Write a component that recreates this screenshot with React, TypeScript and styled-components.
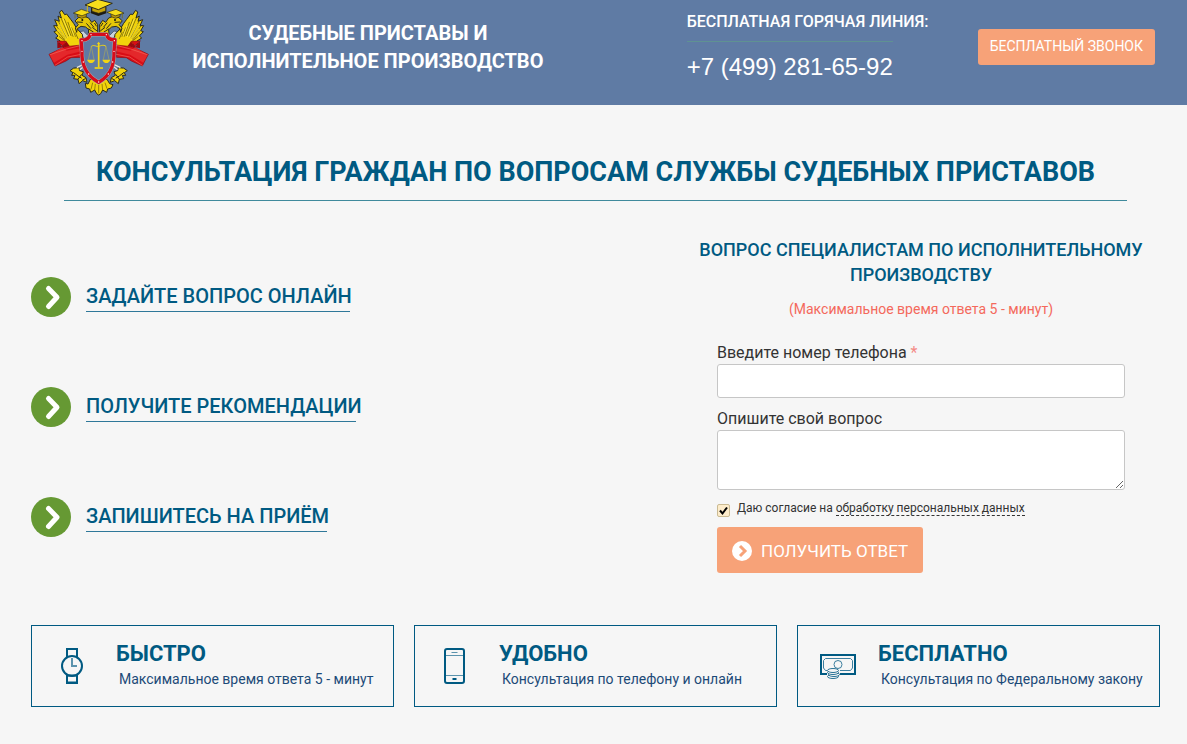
import React from "react";
import styled, { createGlobalStyle } from "styled-components";

const teal = "#005a82";
const peach = "#f7a278";

const GlobalStyle = createGlobalStyle`
  *, *::before, *::after { box-sizing: border-box; }
  body {
    margin: 0;
    background: #f6f6f6;
    color: #333;
    font-family: Roboto, "Liberation Sans", sans-serif;
  }
  h1, h2, h3, p, ul { margin: 0; padding: 0; }
`;

const Header = styled.header`
  display: flex;
  align-items: flex-start;
  height: 105px;
  padding: 0 32px 0 40px;
  background: #5f7ba4;
  color: #fff;
`;

const EmblemSvg = styled.svg`
  flex: none;
  width: 120px;
  height: 105px;
`;

const SiteTitle = styled.p`
  flex: 0 1 416px;
  padding-top: 19px;
  font-size: 20px;
  line-height: 28px;
  font-weight: 700;
  text-align: center;
`;

const Hotline = styled.div`
  flex: 0 0 291px;
  display: flex;
  flex-direction: column;
  align-items: flex-start;
  margin-left: auto;
  padding-top: 12px;
  font-size: 16px;
  line-height: 20px;
  font-weight: 500;
`;

const Phone = styled.a`
  margin-top: 9px;
  padding-top: 11px;
  border-top: 1px solid #5f9292;
  color: #fff;
  font: 24px/28px "Liberation Sans", Arial, sans-serif;
  text-decoration: none;
`;

const CallButton = styled.button`
  flex: none;
  height: 36px;
  margin-top: 29px;
  padding: 0 12px 2px;
  border: 0;
  border-radius: 3px;
  background: ${peach};
  color: #fff;
  font: 400 14px/20px Roboto, "Liberation Sans", sans-serif;
`;

const Main = styled.main`
  padding: 51px 27px 36px 31px;
`;

const PageHeading = styled.h1`
  margin: 0 33px;
  padding-bottom: 12px;
  border-bottom: 1px solid #3f8a9c;
  color: ${teal};
  font-size: 27px;
  line-height: 32px;
  font-weight: 700;
  text-align: center;
`;

const Columns = styled.div`
  display: grid;
  grid-template-columns: 1fr 478px;
  margin-top: 36px;
`;

const Steps = styled.ul`
  display: flex;
  flex-direction: column;
  gap: 70px;
  padding-top: 40px;
  list-style: none;
`;

const Step = styled.li`
  display: flex;
  align-items: center;
  gap: 15px;
  height: 40px;
`;

const StepLink = styled.a<{ $width: number }>`
  width: ${(p) => p.$width}px;
  padding-bottom: 1px;
  border-bottom: 1px solid #2f7899;
  color: ${teal};
  font-size: 20px;
  line-height: 28px;
  font-weight: 500;
  white-space: nowrap;
  text-decoration: none;
`;

const FormTitle = styled.h2`
  color: ${teal};
  font-size: 18px;
  line-height: 25px;
  font-weight: 500;
  text-align: center;
`;

const FormNote = styled.p`
  margin-top: 12px;
  color: #f4695c;
  font-size: 14px;
  line-height: 20px;
  text-align: center;
`;

const Form = styled.form`
  display: flex;
  flex-direction: column;
  gap: 10px;
  margin: 23px 35px 0;
`;

const Field = styled.div`
  display: flex;
  flex-direction: column;
`;

const Label = styled.label`
  font-size: 16px;
  line-height: 22px;
`;

const Required = styled.span`
  color: #f48a86;
`;

const TextInput = styled.input`
  height: 34px;
  padding: 6px 12px;
  border: 1px solid #c6c6c6;
  border-radius: 3px;
  background: #fff;
  font: 14px/20px Roboto, sans-serif;
`;

const TextArea = styled.textarea`
  height: 60px;
  padding: 6px 12px;
  border: 1px solid #c6c6c6;
  border-radius: 3px;
  background: #fff;
  font: 14px/20px Roboto, sans-serif;
  resize: both;
`;

const Consent = styled.div`
  display: flex;
  gap: 7px;
  height: 17px;
  font-size: 12px;
  line-height: 16px;
`;

const TickBox = styled.span`
  display: grid;
  width: 13px;
  height: 13px;
  margin-top: 4px;

  > * { grid-area: 1 / 1; }
  > svg { pointer-events: none; }
`;

const Tick = styled.input`
  appearance: none;
  width: 13px;
  height: 13px;
  margin: 0;
  border: 1px solid #cbbb93;
  border-radius: 2px;
  background: #fdeccb;

  &:not(:checked) + svg { visibility: hidden; }
`;

const ConsentLink = styled.a`
  display: inline-block;
  height: 16px;
  border-bottom: 1px dashed #333;
  color: #333;
  text-decoration: none;
`;

const SubmitButton = styled.button`
  display: flex;
  align-items: center;
  align-self: flex-start;
  gap: 9px;
  height: 46px;
  padding: 2px 15px 0;
  border: 0;
  border-radius: 3px;
  background: ${peach};
  color: #fff;
  font: 400 17px/24px Roboto, "Liberation Sans", sans-serif;
`;

const Cards = styled.section`
  display: grid;
  grid-template-columns: repeat(3, 1fr);
  gap: 20px;
  margin-top: 52px;
`;

const Card = styled.article<{ $gap: number }>`
  display: flex;
  align-items: center;
  gap: ${(p) => p.$gap}px;
  height: 82px;
  padding-left: 22px;
  border: 1px solid ${teal};
`;

const CardTitle = styled.h3`
  color: ${teal};
  font-size: 22px;
  line-height: 28px;
  font-weight: 700;
`;

const CardText = styled.p`
  && { padding: 0 0 2px 3px; }
  color: #1c4a78;
  font-size: 14px;
  line-height: 22px;
`;

function EmblemHalf() {
  return (
    <g strokeLinejoin="round" strokeLinecap="round">
      <path d="M116 96l14-3 20 20-10 8z" fill="#c9d2dc" stroke="#3b4658" strokeWidth="2" />
      <path
        d="M59 37l5 17-10-6 4 16-14-5 8 18-11 0 9 15-8 3 12 13-7 6 14 9-3 9 16 3 12 16 26-2 18-24-3-22-17-18-9-15-9-12-12-16-6 2-8-12z"
        fill="#f1d30b"
        stroke="#2b2a1a"
        strokeWidth="3"
      />
      <path
        d="M64 56l22 52M56 66l24 46M50 79l26 37M53 95l20 24M58 110l18 14M73 57l20 50M84 67l15 42M95 83l11 26M106 98l8 18"
        fill="none"
        stroke="#554c0c"
        strokeWidth="2"
      />
      <path d="M70 58l20 52M60 73l22 40M56 88l22 30M91 78l11 28" fill="none" stroke="#fff05a" strokeWidth="2" />
      <path
        d="M100 205l-10 7 9 6-4 8 10 0-4 10 13 2 3 13 11-9 13 5-3-14-12-7 4-11-11-3-2-8z"
        fill="#f1d30b"
        stroke="#2b2a1a"
        strokeWidth="3"
      />
      <path d="M101 218l13 10 10 6M114 238l10-14M128 240l8-4" fill="none" stroke="#2b2a1a" strokeWidth="3" />
      <path d="M52 123l26 1-11 17 57-6-2 37-29 1-15 10-33 15-10-20-8-15 44-21z" fill="#d90d16" stroke="#8e0911" strokeWidth="2" />
      <path d="M67 142l13 10 44-8v10l-42 10-40 24-10-18-2-6z" fill="#e4282b" />
      <path d="M52 124l15 17 12-17 10 14-22 4-15 3z" fill="#9c0710" />
      <path d="M30 164l50-17 44-11M45 196l38-25 40-8" fill="none" stroke="#f26a5c" strokeWidth="2" />
      <path
        d="M106 62l9-9 18-4 13 5 9 13 9-6 9 13 0 32-28-3 1-14-9-8-14-2-11 7-2 11-4-13 8-9z"
        fill="#e6c708"
        stroke="#2b2a1a"
        strokeWidth="3"
      />
      <path d="M112 66l15 1M140 71l12 14M151 69l10 12M158 83l12 9M146 87l14 9M164 70l5 8" fill="none" stroke="#2b2a1a" strokeWidth="3" />
      <circle cx="127" cy="60" r="3" fill="#111" />
      <path d="M112 41v9l13 5 14-5V40z" fill="#b99709" stroke="#2b2a1a" strokeWidth="2" />
      <path d="M101 39l23-11 27 9-24 10z" fill="#f5dc18" stroke="#2b2a1a" strokeWidth="2" />
      <path d="M105 40v14" stroke="#806c00" strokeWidth="2" />
      <path d="M112 202l17-8M121 208l10-8" stroke="#ece7da" strokeWidth="4" />
    </g>
  );
}

function Emblem() {
  return (
    <EmblemSvg viewBox="0 0 360 315" role="img" aria-label="Эмблема службы судебных приставов">
      <EmblemHalf />
      <g transform="translate(352 0) scale(-1 1)">
        <EmblemHalf />
      </g>
      <path
        d="M151 238l-7 14-8-2 2 14 11 3 3 10 12-7 6 11 6 4 6-4 6-11 12 7 3-10 11-3 5-10-10-3-8-13z"
        fill="#f1d30b"
        stroke="#2b2a1a"
        strokeWidth="3"
        strokeLinejoin="round"
      />
      <path d="M158 248l-5 20M166 252l-2 18M176 254v26M186 252l2 18M195 248l6 18" stroke="#6d5b04" strokeWidth="2" />
      <path d="M153 22v18l22 8 24-8V20z" fill="#1c1a12" />
      <path d="M156 22v12l20 6 21-7V20z" fill="#c6a409" stroke="#2b2a1a" strokeWidth="2" />
      <path d="M135 15l38-17 44 12-42 19z" fill="#f7de1b" stroke="#2b2a1a" strokeWidth="3" strokeLinejoin="round" />
      <path d="M142 17v20" stroke="#d6b812" strokeWidth="3" />
      <path
        d="M151 103h49c2 11 11 17 25 16l-3 35c1 34-5 70-46 93-41-23-52-61-50-93l-3-34c16 1 25-6 28-17z"
        fill="#5f7ba4"
        stroke="#a2a7ae"
        strokeWidth="13"
        strokeLinejoin="round"
      />
      <path
        d="M151 103h49c2 11 11 17 25 16l-3 35c1 34-5 70-46 93-41-23-52-61-50-93l-3-34c16 1 25-6 28-17z"
        fill="none"
        stroke="#d60c1b"
        strokeWidth="10"
        strokeLinejoin="round"
      />
      <g fill="#fff">
        <circle cx="153" cy="104" r="2" />
        <circle cx="199" cy="104" r="2" />
        <circle cx="126" cy="122" r="2" />
        <circle cx="223" cy="122" r="2" />
        <circle cx="126" cy="154" r="2" />
        <circle cx="222" cy="154" r="2" />
        <circle cx="130" cy="186" r="2" />
        <circle cx="218" cy="186" r="2" />
        <circle cx="146" cy="222" r="2" />
        <circle cx="205" cy="222" r="2" />
        <circle cx="176" cy="246" r="2" />
      </g>
      <g stroke="#f2d514" fill="none">
        <path d="M176 130v72" strokeWidth="5" />
        <path d="M154 139c8-6 15 2 22 0s14-6 22 0" strokeWidth="3" />
        <path d="M154 139l-9 40M154 139l8 40M198 139l-8 40M198 139l9 40" strokeWidth="1" />
        <path d="M164 204h25" strokeWidth="5" />
      </g>
      <path d="M141 179h24q-4 10-12 10t-12-10zM187 179h24q-4 10-12 10t-12-10zM171 132l5-7 5 7z" fill="#f2d514" />
    </EmblemSvg>
  );
}

function StepIcon() {
  return (
    <svg width="40" height="40" viewBox="0 0 40 40" aria-hidden="true">
      <circle cx="20" cy="20" r="20" fill="#669933" />
      <path d="M17.500 11.500l8.500 8.700-8.500 9.300" fill="none" stroke="#fff" strokeWidth="5" strokeLinecap="round" strokeLinejoin="round" />
    </svg>
  );
}

function SubmitIcon() {
  return (
    <svg width="20" height="20" viewBox="0 0 20 20" aria-hidden="true">
      <circle cx="10" cy="10" r="10" fill="#fff" />
      <path d="M8 5l5 5-5 5" fill="none" stroke={peach} strokeWidth="3" />
    </svg>
  );
}

function WatchIcon() {
  return (
    <svg width="36" height="36" viewBox="0 0 36 36" fill="none" stroke={teal} strokeWidth="2" aria-hidden="true">
      <path d="M13 9V1h10v8M13 27v8h10v-8" />
      <path d="M13 27.500h10M13 34.500h10" />
      <circle cx="18" cy="18" r="10" />
      <path d="M18 10v8h5" stroke="#5b93ad" />
    </svg>
  );
}

function PhoneIcon() {
  return (
    <svg width="36" height="36" viewBox="0 0 36 36" fill="none" stroke={teal} aria-hidden="true">
      <rect x="8" y="1" width="19" height="34" rx="2" strokeWidth="2" />
      <path d="M9 7.500h17M9 27.500h17M14.500 4.500h6" stroke="#5b93ad" />
      <path d="M15.500 31h4" strokeWidth="2" />
    </svg>
  );
}

function MoneyIcon() {
  return (
    <svg width="36" height="36" viewBox="0 0 36 36" fill="none" stroke={teal} aria-hidden="true">
      <path d="M7 26H1V7h34v19H20" strokeWidth="2" />
      <path d="M7 22.500H5.500L3.500 20v-7.500l2-2h25l2 2V20l-2 2.500H20" stroke="#3c7f9f" />
      <circle cx="18" cy="16.500" r="4" stroke="#3c7f9f" />
      <g fill="#f6f6f6" stroke="#2a7396">
        <ellipse cx="13" cy="28.500" rx="5.500" ry="2" />
        <ellipse cx="14" cy="26.500" rx="5.500" ry="2" />
        <ellipse cx="13" cy="24.500" rx="5.500" ry="2" />
        <ellipse cx="13" cy="22.500" rx="5.500" ry="2" />
      </g>
    </svg>
  );
}

const steps = [
  { text: "ЗАДАЙТЕ ВОПРОС ОНЛАЙН", width: 264 },
  { text: "ПОЛУЧИТЕ РЕКОМЕНДАЦИИ", width: 270 },
  { text: "ЗАПИШИТЕСЬ НА ПРИЁМ", width: 241 },
];

const benefits = [
  { icon: <WatchIcon />, title: "БЫСТРО", text: "Максимальное время ответа 5 - минут", gap: 26 },
  { icon: <PhoneIcon />, title: "УДОБНО", text: "Консультация по телефону и онлайн", gap: 26 },
  { icon: <MoneyIcon />, title: "БЕСПЛАТНО", text: "Консультация по Федеральному закону", gap: 22 },
];

export default function App() {
  return (
    <>
      <GlobalStyle />
      <Header>
        <Emblem />
        <SiteTitle>
          СУДЕБНЫЕ ПРИСТАВЫ И<br />
          ИСПОЛНИТЕЛЬНОЕ ПРОИЗВОДСТВО
        </SiteTitle>
        <Hotline>
          <span>БЕСПЛАТНАЯ ГОРЯЧАЯ ЛИНИЯ:</span>
          <Phone href="tel:+74992816592">+7 (499) 281-65-92</Phone>
        </Hotline>
        <CallButton type="button">БЕСПЛАТНЫЙ ЗВОНОК</CallButton>
      </Header>
      <Main>
        <PageHeading>КОНСУЛЬТАЦИЯ ГРАЖДАН ПО ВОПРОСАМ СЛУЖБЫ СУДЕБНЫХ ПРИСТАВОВ</PageHeading>
        <Columns>
          <Steps>
            {steps.map((s) => (
              <Step key={s.text}>
                <StepIcon />
                <StepLink href="#question" $width={s.width}>
                  {s.text}
                </StepLink>
              </Step>
            ))}
          </Steps>
          <section id="question">
            <FormTitle>ВОПРОС СПЕЦИАЛИСТАМ ПО ИСПОЛНИТЕЛЬНОМУ ПРОИЗВОДСТВУ</FormTitle>
            <FormNote>(Максимальное время ответа 5 - минут)</FormNote>
            <Form onSubmit={(e) => e.preventDefault()}>
              <Field>
                <Label htmlFor="phone">
                  Введите номер телефона <Required>*</Required>
                </Label>
                <TextInput id="phone" type="tel" />
              </Field>
              <Field>
                <Label htmlFor="message">Опишите свой вопрос</Label>
                <TextArea id="message" />
              </Field>
              <Consent>
                <TickBox>
                  <Tick id="consent" type="checkbox" defaultChecked />
                  <svg width="13" height="13" viewBox="0 0 13 13" aria-hidden="true">
                    <path d="M3 6.500l2.500 3L10 3.500" fill="none" stroke="#000" strokeWidth="2" />
                  </svg>
                </TickBox>
                <label htmlFor="consent">
                  Даю согласие на <ConsentLink href="#policy">обработку персональных данных</ConsentLink>
                </label>
              </Consent>
              <SubmitButton type="submit">
                <SubmitIcon />
                ПОЛУЧИТЬ ОТВЕТ
              </SubmitButton>
            </Form>
          </section>
        </Columns>
        <Cards>
          {benefits.map((b) => (
            <Card key={b.title} $gap={b.gap}>
              {b.icon}
              <div>
                <CardTitle>{b.title}</CardTitle>
                <CardText>{b.text}</CardText>
              </div>
            </Card>
          ))}
        </Cards>
      </Main>
    </>
  );
}
